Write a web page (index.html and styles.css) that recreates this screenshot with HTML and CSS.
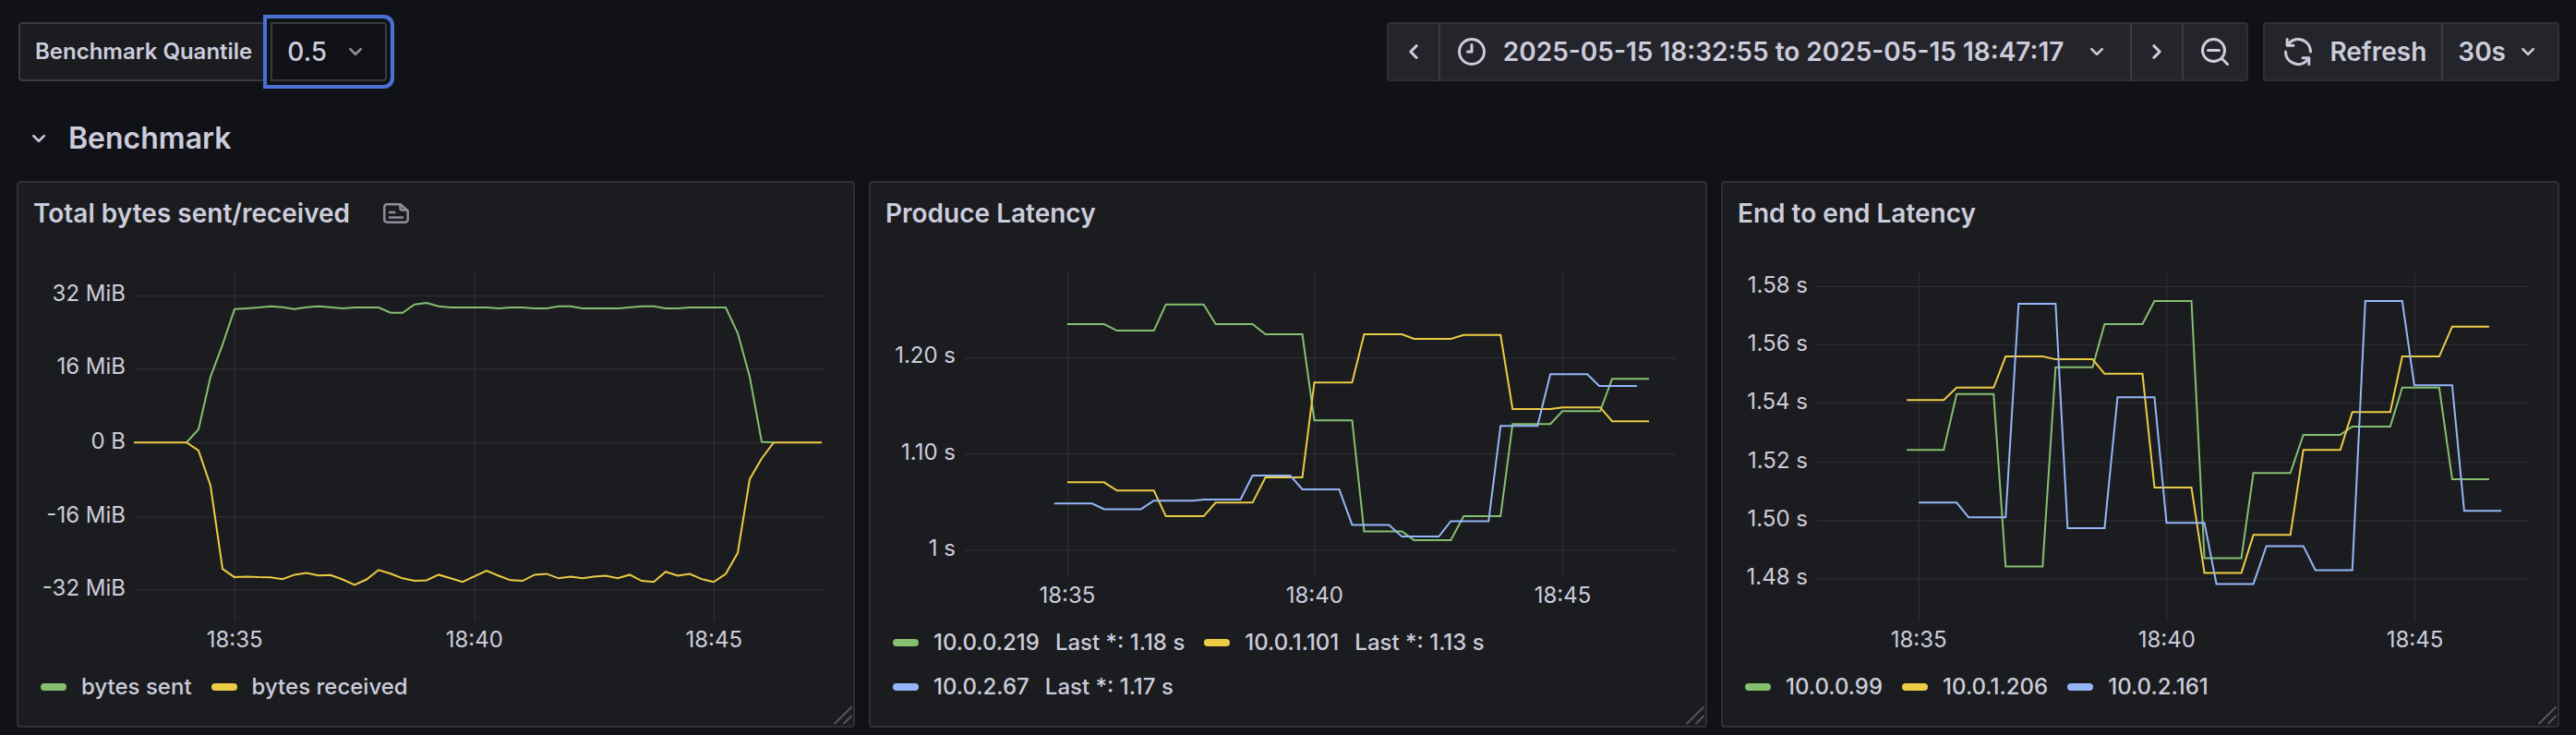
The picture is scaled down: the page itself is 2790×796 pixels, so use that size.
FILE: index.html
```html
<!DOCTYPE html>
<html lang="en">
<head>
<meta charset="utf-8">
<meta name="viewport" content="width=device-width, initial-scale=1">
<title>Benchmark dashboard</title>
<link rel="stylesheet" href="styles.css">
</head>
<body>
<svg class="sprite" aria-hidden="true">
  <symbol id="angle-down" viewBox="0 0 24 24"><path d="M17,9.17a1,1,0,0,0-1.41,0L12,12.71,8.46,9.17a1,1,0,0,0-1.41,0,1,1,0,0,0,0,1.42l4.24,4.24a1,1,0,0,0,1.42,0L17,10.59A1,1,0,0,0,17,9.17Z"/></symbol>
  <symbol id="angle-left" viewBox="0 0 24 24"><path d="M11.29,12l3.54-3.54a1,1,0,0,0,0-1.41,1,1,0,0,0-1.42,0L9.17,11.29a1,1,0,0,0,0,1.42L13.41,17a1,1,0,0,0,.71.29,1,1,0,0,0,.71-.29,1,1,0,0,0,0-1.41Z"/></symbol>
  <symbol id="angle-right" viewBox="0 0 24 24"><path d="M14.83,11.29,10.59,7.05a1,1,0,0,0-1.42,0,1,1,0,0,0,0,1.41L12.71,12,9.17,15.54a1,1,0,0,0,0,1.41,1,1,0,0,0,.71.29,1,1,0,0,0,.71-.29l4.24-4.24A1,1,0,0,0,14.83,11.29Z"/></symbol>
  <symbol id="clock" viewBox="0 0 24 24"><path d="M12,2A10,10,0,1,0,22,12,10,10,0,0,0,12,2Zm0,18a8,8,0,1,1,8-8A8,8,0,0,1,12,20ZM12,6a1,1,0,0,0-1,1v4H9a1,1,0,0,0,0,2h3a1,1,0,0,0,1-1V7A1,1,0,0,0,12,6Z"/></symbol>
  <symbol id="search-minus" viewBox="0 0 24 24"><path d="M21.71,20.29,18,16.61A9,9,0,1,0,16.61,18l3.68,3.68a1,1,0,0,0,1.42,0A1,1,0,0,0,21.71,20.29ZM11,18a7,7,0,1,1,7-7A7,7,0,0,1,11,18Zm4-8H7a1,1,0,0,0,0,2h8a1,1,0,0,0,0-2Z"/></symbol>
  <symbol id="sync" viewBox="0 0 24 24"><path d="M19.91,15.51H15.38a1,1,0,0,0,0,2h2.4A8,8,0,0,1,4,12a1,1,0,0,0-2,0,10,10,0,0,0,16.88,7.23V21a1,1,0,0,0,2,0V16.5A1,1,0,0,0,19.91,15.51ZM12,2A10,10,0,0,0,5.12,4.77V3a1,1,0,0,0-2,0V7.5a1,1,0,0,0,1,1h4.5a1,1,0,0,0,0-2H6.22A8,8,0,0,1,20,12a1,1,0,0,0,2,0A10,10,0,0,0,12,2Z"/></symbol>
  <symbol id="file-alt" viewBox="0 0 28 22"><g fill="none" stroke="currentColor" stroke-width="2.500" stroke-linejoin="round" stroke-linecap="round"><path d="M4 1.300H18.500L26.700 8.500V18a2.700 2.700 0 0 1-2.700 2.700H4a2.700 2.700 0 0 1-2.700-2.700V4a2.700 2.700 0 0 1 2.700-2.700Z"/><path d="M18.500 1.300V5.500a2 2 0 0 0 2 2H26M7 10H12.500M7 15.500H21"/></g></symbol>
  <symbol id="grip" viewBox="0 0 20 20"><path d="M1 18.500 19 1M11 18.500 19 10.500" fill="none" stroke="currentColor" stroke-width="2" stroke-linecap="round"/></symbol>
</svg>

<header class="toolbar">
  <div class="variable">
    <label class="variable-label" for="quantile">Benchmark Quantile</label>
    <div class="variable-field">
      <select class="variable-select" id="quantile"><option>0.5</option></select>
      <svg class="icon-sm variable-arrow" aria-hidden="true"><use href="#angle-down"/></svg>
    </div>
  </div>
  <div class="toolbar-actions">
    <div class="button-group">
      <button class="btn btn-nav" type="button" aria-label="Move time range backwards"><svg class="icon"><use href="#angle-left"/></svg></button>
      <button class="btn btn-range" type="button"><svg class="icon"><use href="#clock"/></svg><span class="range-text">2025-05-15 18:32:55 to 2025-05-15 18:47:17</span><svg class="icon-sm"><use href="#angle-down"/></svg></button>
      <button class="btn btn-nav" type="button" aria-label="Move time range forwards"><svg class="icon"><use href="#angle-right"/></svg></button>
      <button class="btn btn-zoom" type="button" aria-label="Zoom out time range"><svg class="icon"><use href="#search-minus"/></svg></button>
    </div>
    <div class="button-group">
      <button class="btn btn-refresh" type="button"><svg class="icon"><use href="#sync"/></svg>Refresh</button>
      <button class="btn btn-interval" type="button">30s<svg class="icon-sm"><use href="#angle-down"/></svg></button>
    </div>
  </div>
</header>

<main>
  <h2 class="row-heading"><button class="row-toggle" type="button" aria-expanded="true"><svg class="icon-sm"><use href="#angle-down"/></svg>Benchmark</button></h2>

  <div class="panels">
    <section class="panel">
      <div class="panel-header"><h3 class="panel-title">Total bytes sent/received</h3><svg class="icon-file" aria-hidden="true"><use href="#file-alt"/></svg></div>
      <div class="chart chart-bytes">
        <svg class="axis-y" aria-hidden="true">
          <text x="100%" y="6.9%" dy="6">32 MiB</text>
          <text x="100%" y="27.800%" dy="6">16 MiB</text>
          <text x="100%" y="49%" dy="6">0 B</text>
          <text x="100%" y="70.100%" dy="6">-16 MiB</text>
          <text x="100%" y="90.900%" dy="6">-32 MiB</text>
        </svg>
        <svg class="plot" viewBox="145 294 748 379" preserveAspectRatio="none" role="img" aria-label="Bytes sent and received over time">
          <path class="grid" d="M146 320.500H893M146 399.500H893M146 479.500H893M146 559.500H893M146 638.500H893M254.500 295V672M514.500 295V672M773.500 295V672"/>
          <polyline class="line green" points="202,479 215,464.800 228,407.900 241,373.300 254,334.800 267,334 280,333 293,331.600 306,332.800 319,334.800 332,332.800 345,331.600 358,332.800 371,334 384,333 410,333 423,338.700 436,338.700 449,329.700 462,327.900 475,331.600 488,333 527,333 540,334 553,333 566,333 579,334 592,334 605,331.600 618,331.600 631,334 670,334 683,332.800 696,331.600 708,331.600 721,334 734,334 747,333 786,333 799,360.700 812,407.900 825,478.200 838,479"/>
          <polyline class="line yellow" points="145,479 202,479 215,487.600 228,525.700 241,615.700 254,624.700 267,624.100 280,624.700 293,624.900 306,626.700 319,622 332,620 345,622.800 358,622.400 371,627.100 384,633 397,627.100 410,616.900 423,620.800 436,625.900 449,628.600 462,628 475,622 488,625.900 501,629.800 527,617.600 540,623.100 553,627.900 566,628.600 579,622 592,621 605,625.900 618,624.100 631,625.900 643,624.100 656,623.100 669,625.900 682,622 695,628.600 708,629.800 721,618.800 734,623 747,621.200 760,626.700 773,629.800 786,621.200 799,598.400 812,518.600 825,496.200 838,479 890,479"/>
        </svg>
        <svg class="axis-x" aria-hidden="true">
          <text x="14.600%" y="28">18:35</text>
          <text x="49.300%" y="28">18:40</text>
          <text x="84%" y="28">18:45</text>
        </svg>
      </div>
      <ul class="legend">
        <li class="legend-item"><span class="swatch swatch-green"></span>bytes sent</li>
        <li class="legend-item"><span class="swatch swatch-yellow"></span>bytes received</li>
      </ul>
      <svg class="resize" aria-hidden="true"><use href="#grip"/></svg>
    </section>

    <section class="panel">
      <div class="panel-header"><h3 class="panel-title">Produce Latency</h3></div>
      <div class="chart chart-produce">
        <svg class="axis-y" aria-hidden="true">
          <text x="100%" y="28.200%" dy="6">1.20 s</text>
          <text x="100%" y="59.700%" dy="6">1.10 s</text>
          <text x="100%" y="91.200%" dy="6">1 s</text>
        </svg>
        <svg class="plot" viewBox="1044 294 773 331" preserveAspectRatio="none" role="img" aria-label="Produce latency over time">
          <path class="grid" d="M1044 387.500H1817M1044 491.500H1817M1044 595.500H1817M1156.500 295V624M1424.500 295V624M1693.500 295V624"/>
          <polyline class="line green" points="1156,351 1196,351 1210,358 1250,358 1263,329.700 1304,329.700 1317,351 1357,351 1371,362 1411,362 1424,455 1465,455 1478,575 1519,575 1532,584.600 1572,584.600 1586,558.700 1626,558.700 1639,459 1680,459 1693,445 1734,445 1747,410 1787,410"/>
          <polyline class="line yellow" points="1156,522 1196,522 1210,531 1250,531 1263,558.700 1304,558.700 1317,544 1357,544 1371,516.700 1411,516.700 1424,414 1465,414 1478,362 1519,362 1532,366.800 1572,366.800 1586,362.700 1626,362.700 1639,442.800 1680,442.800 1693,441 1734,441 1747,456 1787,456"/>
          <polyline class="line blue" points="1142,545 1183,545 1196,551 1236,551 1250,541.800 1292,541.800 1304,540.600 1344,540.600 1357,514.700 1398,514.700 1411,529.600 1451,529.600 1465,568 1505,568 1519,580.700 1559,580.700 1572,564 1613,564 1626,461 1666,461 1680,405 1720,405 1733,417.700 1774,417.700"/>
        </svg>
        <svg class="axis-x" aria-hidden="true">
          <text x="14.500%" y="28">18:35</text>
          <text x="49.200%" y="28">18:40</text>
          <text x="84%" y="28">18:45</text>
        </svg>
      </div>
      <ul class="legend">
        <li class="legend-item"><span class="swatch swatch-green"></span>10.0.0.219<span class="legend-value">Last *: 1.18 s</span></li>
        <li class="legend-item"><span class="swatch swatch-yellow"></span>10.0.1.101<span class="legend-value">Last *: 1.13 s</span></li>
        <li class="legend-item"><span class="swatch swatch-blue"></span>10.0.2.67<span class="legend-value">Last *: 1.17 s</span></li>
      </ul>
      <svg class="resize" aria-hidden="true"><use href="#grip"/></svg>
    </section>

    <section class="panel">
      <div class="panel-header"><h3 class="panel-title">End to end Latency</h3></div>
      <div class="chart chart-end">
        <svg class="axis-y" aria-hidden="true">
          <text x="100%" y="4.400%" dy="6">1.58 s</text>
          <text x="100%" y="21%" dy="6">1.56 s</text>
          <text x="100%" y="37.600%" dy="6">1.54 s</text>
          <text x="100%" y="54.500%" dy="6">1.52 s</text>
          <text x="100%" y="71.100%" dy="6">1.50 s</text>
          <text x="100%" y="87.700%" dy="6">1.48 s</text>
        </svg>
        <svg class="plot" viewBox="1968 294 771 379" preserveAspectRatio="none" role="img" aria-label="End to end latency over time">
          <path class="grid" d="M1968 310.500H2739M1968 373.500H2739M1968 436.500H2739M1968 500.500H2739M1968 563.500H2739M1968 626.500H2739M2079.500 295V672M2347.500 295V672M2615.500 295V672"/>
          <polyline class="line green" points="2066,487 2106,487 2120,426.700 2160,426.700 2173,613 2213,613 2227,397.600 2267,397.600 2280,351 2321,351 2334,326 2374,326 2388,604 2428,604 2441,512 2481,512 2495,470.700 2535,470.700 2548,461.700 2589,461.700 2602,419.600 2642,419.600 2656,518.600 2696,518.600"/>
          <polyline class="line yellow" points="2066,433 2106,433 2120,419.600 2160,419.600 2173,386 2213,386 2227,389 2267,389 2280,404.700 2321,404.700 2334,527.700 2374,527.700 2388,620 2428,620 2441,579 2481,579 2495,487 2535,487 2548,446 2589,446 2602,386 2642,386 2656,353.600 2696,353.600"/>
          <polyline class="line blue" points="2079,544 2120,544 2133,560 2173,560 2187,329 2227,329 2240,571.700 2280,571.700 2294,430 2334,430 2347,566 2388,566 2401,632 2441,632 2455,591 2495,591 2508,617 2548,617 2562,326 2602,326 2615,417 2656,417 2669,553 2709,553"/>
        </svg>
        <svg class="axis-x" aria-hidden="true">
          <text x="14.400%" y="28">18:35</text>
          <text x="49.200%" y="28">18:40</text>
          <text x="84%" y="28">18:45</text>
        </svg>
      </div>
      <ul class="legend">
        <li class="legend-item"><span class="swatch swatch-green"></span>10.0.0.99</li>
        <li class="legend-item"><span class="swatch swatch-yellow"></span>10.0.1.206</li>
        <li class="legend-item"><span class="swatch swatch-blue"></span>10.0.2.161</li>
      </ul>
      <svg class="resize" aria-hidden="true"><use href="#grip"/></svg>
    </section>
  </div>
</main>
</body>
</html>
```

FILE: styles.css
```css
:root {
  --page: #111217;
  --surface: #1b1c1f;
  --control: #24252a;
  --border: #2f3035;
  --text: #ccccdc;
  --muted: #8e8e9a;
  --focus: #4a72d4;
  --green: #85bf70;
  --yellow: #eccb45;
  --blue: #94b6f8;
}

* {
  box-sizing: border-box;
}

body {
  margin: 0;
  padding: 24px 18px 8px;
  min-height: 100vh;
  display: flex;
  flex-direction: column;
  background: var(--page);
  color: var(--text);
  font-family: Inter, "Liberation Sans", sans-serif;
  font-size: 24px;
  line-height: 32px;
}

button,
select {
  font: inherit;
  color: inherit;
}

.sprite {
  position: absolute;
  width: 0;
  height: 0;
}

.icon,
.icon-sm {
  flex: none;
  width: 36px;
  height: 36px;
  fill: currentColor;
}

.icon-sm {
  width: 32px;
  height: 32px;
}

/* Toolbar */
.toolbar {
  display: flex;
  justify-content: space-between;
  padding-left: 2px;
}

.variable {
  display: flex;
}

.variable-label {
  display: flex;
  align-items: center;
  height: 64px;
  padding: 0 20px 0 16px;
  background: var(--surface);
  border: 2px solid #3a3b40;
  border-right: 0;
  border-radius: 4px 0 0 4px;
  font-weight: 600;
}

.variable-field {
  display: grid;
  align-items: center;
}

.variable-select {
  grid-area: 1 / 1;
  width: 126px;
  height: 64px;
  padding: 0 16px;
  appearance: none;
  background: var(--page);
  border: 2px solid #3a3b40;
  border-radius: 0 4px 4px 0;
  box-shadow: 0 0 0 4px var(--page), 0 0 0 8px var(--focus);
  font-size: 28px;
  font-weight: 500;
  outline: 0;
}

.variable-arrow {
  grid-area: 1 / 1;
  justify-self: end;
  margin-right: 18px;
  color: var(--muted);
  pointer-events: none;
}

.toolbar-actions {
  display: flex;
  gap: 16px;
}

.button-group {
  display: flex;
}

.btn {
  display: flex;
  align-items: center;
  justify-content: center;
  height: 64px;
  padding: 0 16px;
  background: var(--control);
  border: 2px solid var(--border);
  border-right-width: 0;
  font-size: 28px;
  font-weight: 600;
  white-space: nowrap;
}

.btn + .btn {
  border-left-color: #3a3b40;
}

.btn:first-child {
  border-radius: 4px 0 0 4px;
}

.btn:last-child {
  border-right-width: 2px;
  border-radius: 0 4px 4px 0;
}

.btn-nav {
  width: 56px;
  padding: 0;
}

.btn-range {
  gap: 16px;
  padding-right: 20px;
}

.range-text {
  margin-right: 4px;
}

.btn-zoom {
  width: 72px;
}

.btn-refresh {
  gap: 16px;
  padding-left: 18px;
}

.btn-interval {
  gap: 8px;
}

/* Row heading */
.row-heading {
  margin: 0;
  padding: 42px 8px 26px;
  font-size: 32px;
  font-weight: 600;
  line-height: 40px;
}

.row-toggle {
  display: flex;
  align-items: center;
  gap: 16px;
  padding: 0;
  background: none;
  border: 0;
}

main {
  flex: 1;
  display: flex;
  flex-direction: column;
}

/* Panels */
.panels {
  flex: 1;
  display: grid;
  grid-template-columns: repeat(3, minmax(0, 1fr));
  gap: 15px;
}

.panel {
  position: relative;
  display: flex;
  flex-direction: column;
  background: var(--surface);
  border: 2px solid var(--border);
  border-radius: 4px;
}

.panel-header {
  display: flex;
  align-items: center;
  gap: 36px;
  height: 64px;
  padding: 2px 16px 0;
}

.panel-title {
  margin: 0;
  font-size: 28px;
  font-weight: 600;
}

.icon-file {
  width: 28px;
  height: 22px;
  color: var(--muted);
}

.chart {
  flex: 1;
  display: grid;
  grid-template-rows: minmax(0, 1fr) 41px;
  column-gap: 9px;
  padding: 32px 31px 0 16px;
}

.chart-bytes {
  grid-template-columns: 100px minmax(0, 1fr);
}

.chart-produce,
.chart-end {
  grid-template-columns: 76px minmax(0, 1fr);
}

.axis-y,
.axis-x,
.plot {
  width: 100%;
  height: 100%;
  overflow: visible;
}

.axis-x {
  grid-column: 2;
}

.axis-y text,
.axis-x text {
  fill: var(--text);
  font-size: 24px;
}

.axis-y text {
  text-anchor: end;
}

.axis-x text {
  text-anchor: middle;
}

.grid,
.line {
  fill: none;
  vector-effect: non-scaling-stroke;
}

.grid {
  stroke: #303136;
  stroke-width: 1px;
}

.line {
  stroke-width: 2px;
}

.green {
  stroke: var(--green);
}

.yellow {
  stroke: var(--yellow);
}

.blue {
  stroke: var(--blue);
}

.legend {
  display: flex;
  flex-wrap: wrap;
  column-gap: 21px;
  row-gap: 16px;
  margin: 0;
  padding: 14px 24px 26px;
  list-style: none;
  font-weight: 500;
}

.legend-item {
  display: flex;
  align-items: center;
}

.legend-value {
  margin-left: 17px;
}

.swatch {
  width: 28px;
  height: 8px;
  margin-right: 16px;
  border-radius: 4px;
}

.swatch-green {
  background: var(--green);
}

.swatch-yellow {
  background: var(--yellow);
}

.swatch-blue {
  background: var(--blue);
}

.resize {
  position: absolute;
  right: 1px;
  bottom: 1px;
  width: 20px;
  height: 20px;
  color: #55565b;
}
```
